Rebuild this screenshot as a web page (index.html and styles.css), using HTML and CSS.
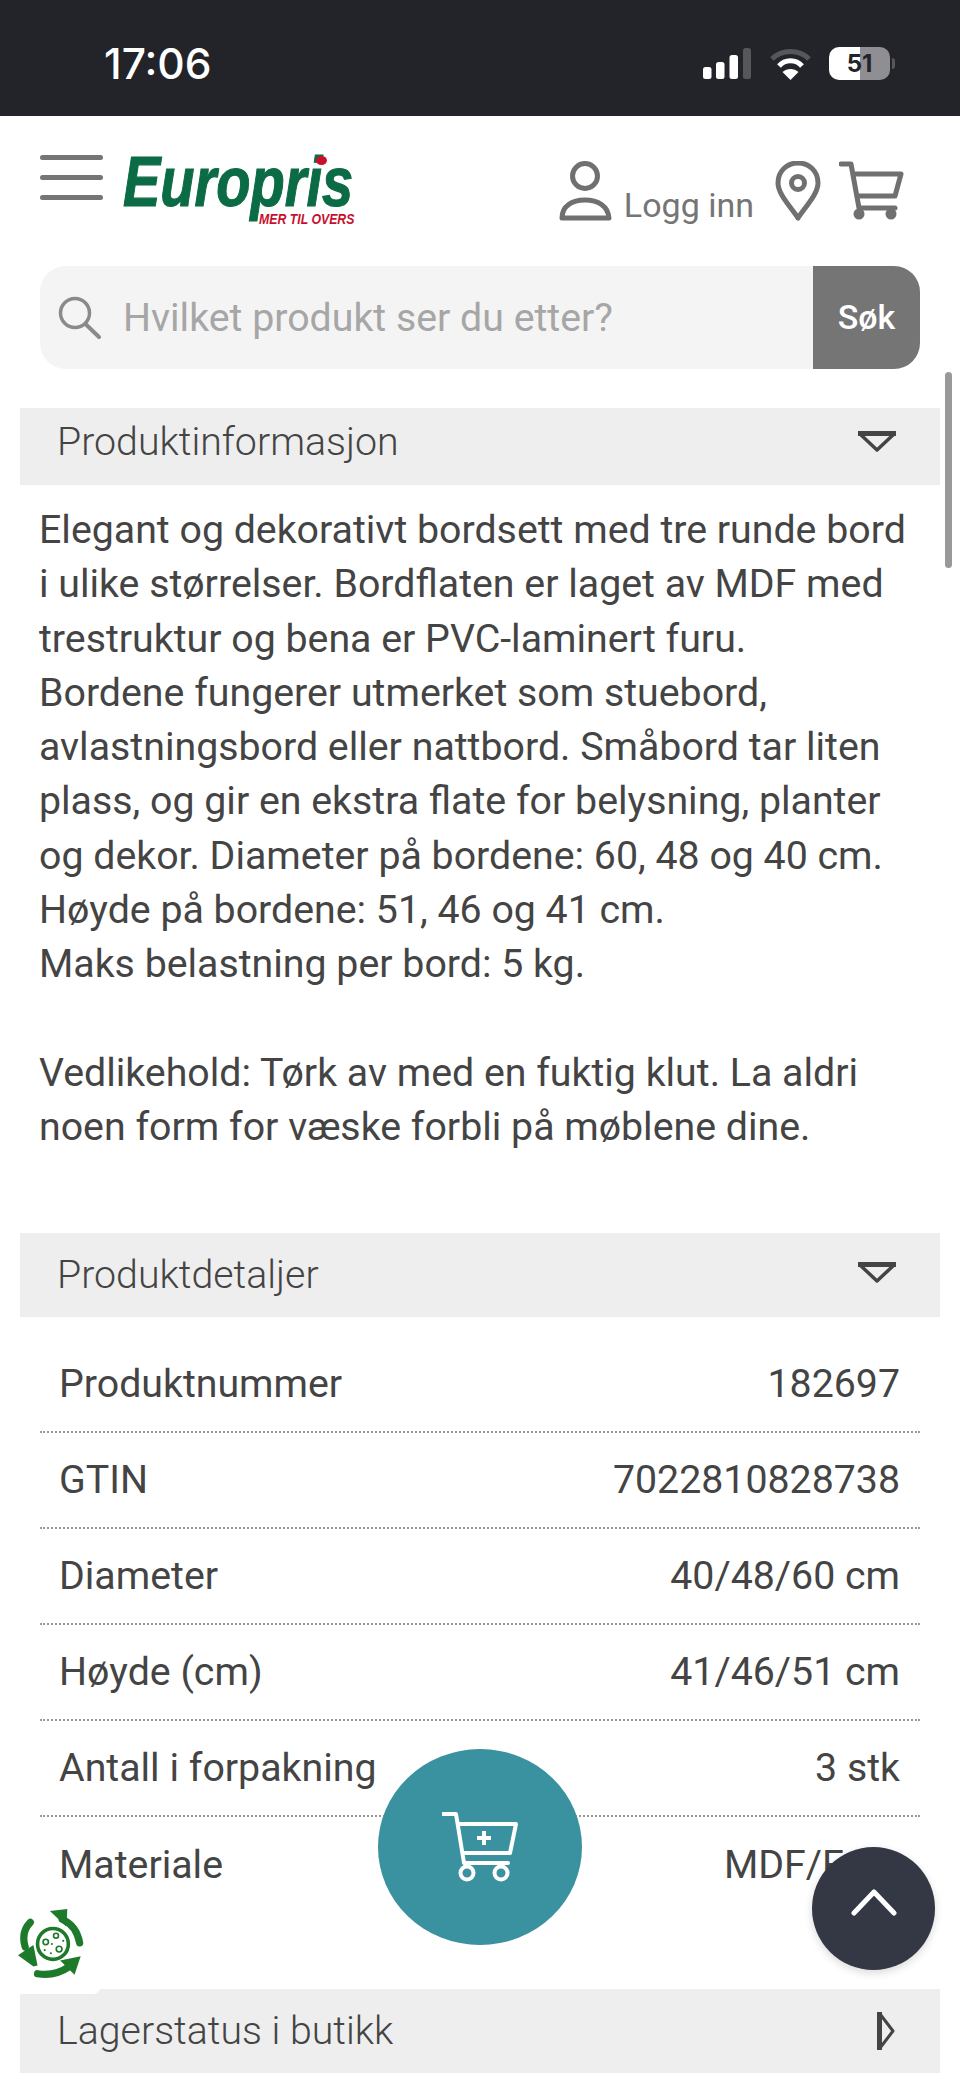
FILE: index.html
```html
<!DOCTYPE html>
<html lang="nb">
<head>
  <meta charset="UTF-8" />
  <meta name="viewport" content="width=device-width, initial-scale=1.0" />
  <title>Europris - Produkt</title>
  <link rel="stylesheet" href="styles.css">
</head>
<body>
  <div class="page">
    <div class="status-bar">
      <span class="status-time">17:06</span>
      <div class="status-icons">
        <svg class="signal" width="48" height="32" viewBox="0 0 48 32">
          <rect x="0" y="19" width="8.5" height="12" rx="2.5" fill="#fff"/>
          <rect x="13" y="14" width="8.5" height="17" rx="2.5" fill="#fff"/>
          <rect x="26.5" y="7" width="8.5" height="24" rx="2.5" fill="#fff"/>
          <rect x="40" y="0" width="8" height="31" rx="2.5" fill="#56575b"/>
        </svg>
        <svg class="wifi" width="41" height="32" viewBox="0 0 41 32">
          <path d="M2 11 C12 1 29 1 39 11" fill="none" stroke="#56575b" stroke-width="5"/>
          <path d="M9 18 C15 11 26 11 32 18" fill="none" stroke="#fff" stroke-width="5"/>
          <path d="M12.5 24 L20.5 32 L28.5 24 C24 20 17 20 12.5 24 Z" fill="#fff"/>
        </svg>
        <div class="battery"><span>51</span></div>
        <div class="battery-nub"></div>
      </div>
    </div>

    <header class="site-header">
      <div class="menu-btn"><span></span><span></span><span></span></div>
      <div class="logo">
        <span class="logo-name">Europris</span>
        <span class="logo-dot"></span>
        <span class="logo-tag">MER TIL OVERS</span>
      </div>
      <div class="header-actions">
        <svg class="icon-user" width="54" height="60" viewBox="0 0 54 60">
          <circle cx="26" cy="15" r="12.5" fill="none" stroke="#707070" stroke-width="5"/>
          <path d="M3 57 C3 45 13 39 26 39 S49 45 50 57 Z" fill="none" stroke="#707070" stroke-width="5" stroke-linejoin="round"/>
        </svg>
        <span class="login-text">Logg inn</span>
        <svg class="icon-pin" width="46" height="60" viewBox="0 0 46 60">
          <path d="M23 57 C15 45 3 33 3 22 C3 10 12 2 23 2 S43 10 43 22 C43 33 31 45 23 57 Z" fill="none" stroke="#707070" stroke-width="5" stroke-linejoin="round"/>
          <circle cx="23" cy="22" r="6.5" fill="none" stroke="#707070" stroke-width="5"/>
        </svg>
        <svg class="icon-cart" width="65" height="60" viewBox="0 0 65 60">
          <path d="M2 3 H12 L20 47 H56 M15 13 H62 L56 35 H18" fill="none" stroke="#707070" stroke-width="5" stroke-linecap="round" stroke-linejoin="round"/>
          <circle cx="20" cy="53" r="5.5" fill="#707070"/>
          <circle cx="52" cy="53" r="5.5" fill="#707070"/>
        </svg>
      </div>
    </header>

    <div class="search">
      <svg class="search-icon" width="46" height="46" viewBox="0 0 46 46">
        <circle cx="17" cy="17" r="14.5" fill="none" stroke="#8a8a8a" stroke-width="3.5"/>
        <path d="M27.5 28 L41 41" stroke="#8a8a8a" stroke-width="4" stroke-linecap="round"/>
      </svg>
      <span class="search-text">Hvilket produkt ser du etter?</span>
      <div class="search-btn">Søk</div>
    </div>

    <section class="section section-info">
      <div class="section-head head-info">
        <span>Produktinformasjon</span>
        <svg class="arrow-down" width="40" height="21" viewBox="0 0 40 21">
          <path d="M3 3 H37 L20 19 Z" fill="none" stroke="#444" stroke-width="3.5" stroke-linejoin="round"/>
          <path d="M1 0 H39 V5 H1 Z" fill="#444"/>
        </svg>
      </div>
      <p class="description">Elegant og dekorativt bordsett med tre runde bord<br>i ulike størrelser. Bordflaten er laget av MDF med<br>trestruktur og bena er PVC-laminert furu.<br>Bordene fungerer utmerket som stuebord,<br>avlastningsbord eller nattbord. Småbord tar liten<br>plass, og gir en ekstra flate for belysning, planter<br>og dekor. Diameter på bordene: 60, 48 og 40 cm.<br>Høyde på bordene: 51, 46 og 41 cm.<br>Maks belastning per bord: 5 kg.<br><br>Vedlikehold: Tørk av med en fuktig klut. La aldri<br>noen form for væske forbli på møblene dine.</p>
    </section>

    <section class="section section-details">
      <div class="section-head head-details">
        <span>Produktdetaljer</span>
        <svg class="arrow-down" width="40" height="21" viewBox="0 0 40 21">
          <path d="M3 3 H37 L20 19 Z" fill="none" stroke="#444" stroke-width="3.5" stroke-linejoin="round"/>
          <path d="M1 0 H39 V5 H1 Z" fill="#444"/>
        </svg>
      </div>
      <div class="details">
        <div class="detail-row"><span>Produktnummer</span><span>182697</span></div>
        <div class="detail-row"><span>GTIN</span><span>7022810828738</span></div>
        <div class="detail-row"><span>Diameter</span><span>40/48/60 cm</span></div>
        <div class="detail-row"><span>Høyde (cm)</span><span>41/46/51 cm</span></div>
        <div class="detail-row"><span>Antall i forpakning</span><span>3 stk</span></div>
        <div class="detail-row last"><span>Materiale</span><span>MDF/Furu</span></div>
      </div>
    </section>

    <section class="section section-stock">
      <div class="section-head">
        <span>Lagerstatus i butikk</span>
        <svg class="arrow-right" width="18" height="38" viewBox="0 0 18 38">
          <path d="M3 2 L16 19 L3 36 Z" fill="none" stroke="#444" stroke-width="3" stroke-linejoin="round"/>
          <path d="M0 0 H5 V38 H0 Z" fill="#444"/>
        </svg>
      </div>
    </section>

    <div class="scroll-thumb"></div>

    <div class="recycle-btn">
      <svg width="74" height="74" viewBox="0 0 72 72">
        <circle cx="34" cy="34" r="15" fill="none" stroke="#1c7a2a" stroke-width="3.5"/>
        <circle cx="27" cy="32" r="2.6" fill="none" stroke="#1c7a2a" stroke-width="1.6"/>
        <circle cx="37" cy="26" r="2.4" fill="none" stroke="#1c7a2a" stroke-width="1.6"/>
        <circle cx="40" cy="39" r="2.8" fill="none" stroke="#1c7a2a" stroke-width="1.6"/>
        <circle cx="32" cy="43" r="1" fill="#1c7a2a"/>
        <circle cx="26" cy="40" r="1" fill="#1c7a2a"/>
        <circle cx="33" cy="34" r="1" fill="#1c7a2a"/>
        <circle cx="44" cy="31" r="1" fill="#1c7a2a"/>
        <path d="M60 33 C58 22 52 14 43 10" fill="none" stroke="#1c7a2a" stroke-width="7" stroke-linecap="round"/>
        <path d="M31 2 L48 0 L47 17 Z" fill="#1c7a2a"/>
        <path d="M12 13 C6 19 4 27 7 37" fill="none" stroke="#1c7a2a" stroke-width="7" stroke-linecap="round"/>
        <path d="M0 45 L15 35 L19 55 L15 56 Z" fill="#1c7a2a"/>
        <path d="M19 63 C31 65 40 63 50 56" fill="none" stroke="#1c7a2a" stroke-width="7" stroke-linecap="round"/>
        <path d="M41 50 L61 46 L55 64 Z" fill="#1c7a2a"/>
      </svg>
    </div>

    <div class="add-to-cart">
      <svg width="76" height="70" viewBox="0 0 76 70">
        <path d="M1 2 H14 L22 51 H66 M16 12 H74 L68 41 H21" fill="none" stroke="#fff" stroke-width="4" stroke-linecap="round" stroke-linejoin="round"/>
        <path d="M42 19 V33 M35 26 H49" stroke="#fff" stroke-width="4"/>
        <circle cx="25" cy="61" r="6.5" fill="none" stroke="#fff" stroke-width="4"/>
        <circle cx="59" cy="61" r="6.5" fill="none" stroke="#fff" stroke-width="4"/>
      </svg>
    </div>

    <div class="to-top">
      <svg width="46" height="28" viewBox="0 0 46 28">
        <path d="M3 25 L23 4 L43 25" fill="none" stroke="#fff" stroke-width="5" stroke-linecap="round" stroke-linejoin="round"/>
      </svg>
    </div>
  </div>
</body>
</html>
```

FILE: styles.css
```css
:root {
  --text-color: #444;
  --icon-color: #707070;
  --head-color: #eeeeee;
}

* {
  box-sizing: border-box;
}

html, body {
  margin: 0;
  padding: 0;
}

body {
  font-family: Roboto, "Liberation Sans", sans-serif;
  color: var(--text-color);
  background: #fff;
}

.page {
  position: relative;
  width: 960px;
  height: 2078px;
  overflow: hidden;
}

/* status bar */
.status-bar {
  height: 116px;
  background: #23242a;
  display: flex;
  justify-content: space-between;
  padding: 47px 65px 0 104px;
}

.status-time {
  font-family: Inter, sans-serif;
  font-weight: 500;
  font-size: 42.5px;
  line-height: 34px;
  color: #fff;
}

.status-icons {
  display: flex;
  align-items: flex-start;
  height: 33px;
}

.signal {
  margin-right: 19px;
  margin-top: 1px;
}

.wifi {
  margin-right: 18px;
  margin-top: 1px;
}

.battery {
  width: 61px;
  height: 33px;
  border-radius: 10px;
  background: linear-gradient(to right, #fff 51%, #8e8e93 51%);
  display: flex;
  align-items: center;
  justify-content: center;
  font-family: Inter, sans-serif;
  font-weight: 700;
  font-size: 24px;
  color: #23242a;
}

.battery-nub {
  width: 3px;
  height: 11px;
  margin: 11px 0 0 2px;
  background: #56575b;
  border-radius: 0 3px 3px 0;
}

/* header */
.site-header {
  display: flex;
  align-items: flex-start;
  height: 150px;
  padding: 39px 0 0 40px;
}

.menu-btn {
  width: 63px;
  display: flex;
  flex-direction: column;
  gap: 15px;
  margin-right: 20px;
}

.menu-btn span {
  display: block;
  height: 5px;
  border-radius: 3px;
  background: #757575;
}

.logo {
  position: relative;
  width: 234px;
  height: 70px;
  font-family: "Liberation Sans", sans-serif;
  font-weight: 700;
  font-style: italic;
}

.logo-name {
  display: block;
  width: 288px;
  font-size: 70px;
  line-height: 54px;
  color: #0b6b45;
  -webkit-text-stroke: 1.2px #0b6b45;
  transform: scaleX(0.80);
  transform-origin: left top;
}

.logo-dot {
  position: absolute;
  left: 193px;
  top: 1px;
  width: 11px;
  height: 9px;
  border-radius: 50%;
  background: #c8102e;
}

.logo-tag {
  position: absolute;
  left: 136px;
  top: 57px;
  width: 112px;
  font-size: 15px;
  line-height: 13px;
  color: #c8102e;
  white-space: nowrap;
  transform: scaleX(0.82);
  transform-origin: left top;
}

.header-actions {
  display: flex;
  align-items: flex-start;
  margin-left: auto;
  padding-top: 6px;
  margin-right: 56px;
}

.icon-user {
  margin-right: 11px;
}

.login-text {
  font-size: 34px;
  line-height: 42px;
  margin-top: 23px;
  margin-right: 21px;
  color: #757575;
}

.icon-pin {
  margin-right: 18px;
}

/* search */
.search {
  display: flex;
  align-items: center;
  height: 103px;
  margin: 0 40px;
  background: #f4f4f4;
  border-radius: 26px;
  overflow: hidden;
  padding-left: 18px;
}

.search-icon {
  margin: 2px 19px 0 0;
  flex-shrink: 0;
}

.search-text {
  font-size: 39.3px;
  color: #a6a6a6;
}

.search-btn {
  margin-left: auto;
  width: 107px;
  height: 100%;
  background: #757575;
  color: #fff;
  font-size: 34px;
  font-weight: 500;
  display: flex;
  align-items: center;
  justify-content: center;
  padding-bottom: 2px;
}

/* sections */
.section {
  margin: 0 20px;
}

.section-info {
  margin-top: 39px;
}

.section-details {
  margin-top: 78px;
}

.section-stock {
  margin-top: 76px;
}

.section-head {
  height: 84px;
  background: var(--head-color);
  display: flex;
  align-items: center;
  justify-content: space-between;
  padding: 0 43px 0 37px;
  font-size: 39.3px;
  font-weight: 300;
  color: #444;
}

.head-info {
  height: 77px;
  padding-bottom: 10px;
}

.head-details .arrow-down {
  margin-bottom: 4px;
}

.description {
  margin: 18px 0 0;
  padding: 0 19px;
  font-size: 39.3px;
  line-height: 54.3px;
  color: var(--text-color);
}

.details {
  margin-top: 20px;
  padding: 0 20px;
}

.detail-row {
  height: 96px;
  display: flex;
  justify-content: space-between;
  align-items: center;
  padding: 0 20px 0 19px;
  font-size: 39.3px;
  border-bottom: 2px dotted #9a9a9a;
}

.detail-row.last {
  border-bottom: none;
}

.section-stock .section-head {
  padding-right: 45px;
}

/* things that float over the page */
.scroll-thumb {
  position: absolute;
  left: 945px;
  top: 372px;
  width: 7px;
  height: 196px;
  border-radius: 4px;
  background: #999;
}

.recycle-btn {
  position: absolute;
  left: 0;
  top: 1895px;
  width: 100px;
  height: 99px;
  background: #fff;
  border-radius: 0 0 6px 0;
  padding: 14px 0 0 18px;
}

.add-to-cart {
  position: absolute;
  left: 378px;
  top: 1749px;
  width: 204px;
  height: 196px;
  border-radius: 50%;
  background: #3a919f;
  display: flex;
  align-items: center;
  justify-content: center;
}

.to-top {
  position: absolute;
  left: 812px;
  top: 1847px;
  width: 123px;
  height: 123px;
  border-radius: 50%;
  background: #343744;
  box-shadow: 0 3px 8px rgba(0,0,0,0.15);
  display: flex;
  align-items: center;
  justify-content: center;
  padding-bottom: 13px;
}
```
